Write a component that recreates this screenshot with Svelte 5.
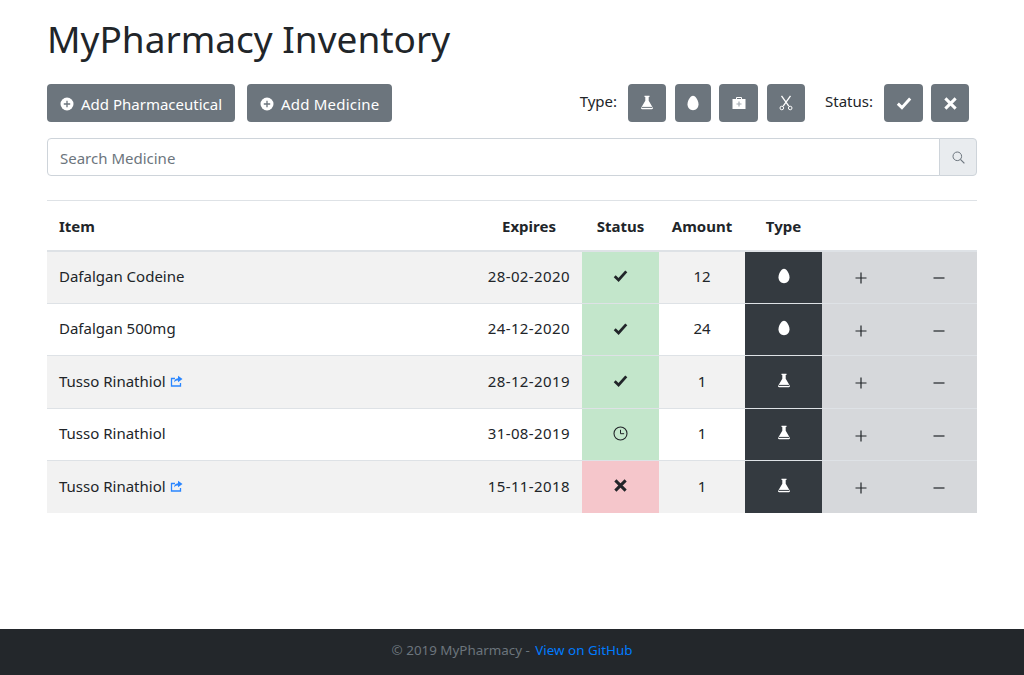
<script>
	const rows = [
		{ name: 'Dafalgan Codeine', expires: '28-02-2020', status: 'ok', amount: 12, type: 'egg', link: false },
		{ name: 'Dafalgan 500mg', expires: '24-12-2020', status: 'ok', amount: 24, type: 'egg', link: false },
		{ name: 'Tusso Rinathiol', expires: '28-12-2019', status: 'ok', amount: 1, type: 'flask', link: true },
		{ name: 'Tusso Rinathiol', expires: '31-08-2019', status: 'soon', amount: 1, type: 'flask', link: false },
		{ name: 'Tusso Rinathiol', expires: '15-11-2018', status: 'expired', amount: 1, type: 'flask', link: true }
	];
</script>

{#snippet plusCircle()}
	<svg class="ic-plus" width="14" height="14" viewBox="0 0 14 14">
		<circle cx="7" cy="7" r="6.5" fill="#fff" />
		<path d="M7 3.8v6.4M3.8 7h6.4" stroke="#6c757d" stroke-width="1.3" />
	</svg>
{/snippet}

{#snippet flask(line)}
	<svg width="16" height="16" viewBox="0 0 16 16">
		<path d="M5.500 .8h5v1.100h-.8v3.900l4 6.700c.5 .9 .1 1.700 -.9 1.700H3.200c-1 0 -1.400 -.8 -.9 -1.700l4 -6.700V1.900h-.8z" fill="#fff" />
		<path d="M2.800 12.400h10.400" stroke={line} stroke-width="1" />
	</svg>
{/snippet}

{#snippet egg()}
	<svg width="16" height="16" viewBox="0 0 16 16">
		<path d="M8 .8c2.700 0 5.500 4.900 5.500 8.500 0 3.600 -2.400 5.900 -5.500 5.900s-5.500 -2.300 -5.500 -5.900C2.500 5.700 5.300 .8 8 .8z" fill="#fff" />
	</svg>
{/snippet}

{#snippet check(size, color)}
	<svg width={size} height={size} viewBox="0 0 14 14">
		<path d="M1.600 7.600l3.600 3.500 7.200-8" fill="none" stroke={color} stroke-width="2.600" />
	</svg>
{/snippet}

{#snippet cross(size, color)}
	<svg width={size} height={size} viewBox="0 0 14 14">
		<path d="M2.200 2.200l9.600 9.600M11.800 2.200l-9.600 9.600" fill="none" stroke={color} stroke-width="2.800" />
	</svg>
{/snippet}

{#snippet share()}
	<svg class="share" width="13" height="13" viewBox="0 0 13 13">
		<path d="M5 3.500H1.500v7.500h9V8" fill="none" stroke="#2a86ff" stroke-width="1.300" />
		<path d="M8 .8l4.500 3.200L8 7.200V5.400c-1.800 0-3 .6-4 2 .2-2.400 1.600-3.900 4-4.200z" fill="#2a86ff" />
	</svg>
{/snippet}

<div class="container">
	<h1>MyPharmacy Inventory</h1>

	<div class="toolbar">
		<button class="btn add">{@render plusCircle()} Add Pharmaceutical</button>
		<button class="btn add medicine">{@render plusCircle()} Add Medicine</button>
		<div class="filters">
			<span class="label">Type:</span>
			<button class="btn icon" aria-label="Pharmaceutical">{@render flask('#6c757d')}</button>
			<button class="btn icon narrow" aria-label="Medicine">{@render egg()}</button>
			<button class="btn icon wide tight" aria-label="First aid">
				<svg width="16" height="16" viewBox="0 0 16 16">
					<path d="M5.500 4V2.500h5V4" fill="none" stroke="#fff" stroke-width="1" />
					<rect x="1.500" y="4" width="13" height="10" fill="#fff" />
					<path d="M8 6.500v5M5.500 9h5" stroke="#a4abb1" stroke-width="1.200" />
				</svg>
			</button>
			<button class="btn icon" aria-label="Instruments">
				<svg width="16" height="16" viewBox="0 0 16 16" fill="none" stroke="#fff">
					<path d="M3.500 .8l7.300 10.400M12.500 .8L5.200 11.200" stroke-width="1.300" />
					<circle cx="3.800" cy="13" r="1.800" />
					<circle cx="12.200" cy="13" r="1.800" />
				</svg>
			</button>
			<span class="label status-label">Status:</span>
			<button class="btn icon wide" aria-label="Valid">{@render check(16, '#fff')}</button>
			<button class="btn icon tight" aria-label="Expired">{@render cross(15, '#fff')}</button>
		</div>
	</div>

	<div class="search">
		<input type="text" placeholder="Search Medicine" />
		<span class="search-btn">
			<svg width="13" height="13" viewBox="0 0 13 13" fill="none" stroke="#6c757d">
				<circle cx="5.300" cy="5.300" r="4.300" />
				<path d="M8.400 8.400l4 4" stroke-width="1.200" />
			</svg>
		</span>
	</div>

	<table>
		<colgroup>
			<col style="width:429px" />
			<col style="width:106px" />
			<col style="width:77px" />
			<col style="width:86px" />
			<col style="width:77px" />
			<col style="width:78px" />
			<col style="width:77px" />
		</colgroup>
		<thead>
			<tr>
				<th class="left">Item</th>
				<th>Expires</th>
				<th>Status</th>
				<th>Amount</th>
				<th>Type</th>
				<th></th>
				<th></th>
			</tr>
		</thead>
		<tbody>
			{#each rows as row, i}
				<tr class:odd={i % 2 === 0}>
					<td class="left">{row.name}{#if row.link}{@render share()}{/if}</td>
					<td class="date">{row.expires}</td>
					<td class={row.status === 'expired' ? 'danger' : 'success'}>
						{#if row.status === 'ok'}
							{@render check(15, '#212529')}
						{:else if row.status === 'soon'}
							<svg width="15" height="15" viewBox="0 0 15 15" fill="none" stroke="#212529">
								<circle cx="7.500" cy="7.500" r="6.500" stroke-width="1.100" />
								<path d="M7.500 3.800v3.900h3.600" stroke-width="1" />
							</svg>
						{:else}
							{@render cross(15, '#212529')}
						{/if}
					</td>
					<td>{row.amount}</td>
					<td class="dark">
						{#if row.type === 'egg'}{@render egg()}{:else}{@render flask('#343a40')}{/if}
					</td>
					<td class="secondary">
						<svg class="adjust" width="12" height="12" viewBox="0 0 12 12"><path d="M6 .5v11M.5 6h11" stroke="#212529" stroke-width="1.200" /></svg>
					</td>
					<td class="secondary">
						<svg class="adjust" width="12" height="12" viewBox="0 0 12 12"><path d="M.5 6h11" stroke="#212529" stroke-width="1.200" /></svg>
					</td>
				</tr>
			{/each}
		</tbody>
	</table>
</div>

<footer>
	<span>© 2019 MyPharmacy -{' '}</span><a href="#top">View on GitHub</a>
</footer>

<style>
	:global(body) {
		margin: 0;
		font-family: 'Noto Sans', 'Open Sans', sans-serif;
		font-size: 15px;
		color: #212529;
		background: #fff;
	}

	.container {
		box-sizing: border-box;
		width: 960px;
		height: 629px;
		margin: 0 auto;
		padding: 0 15px;
	}

	h1 {
		margin: 0;
		padding-top: 15px;
		height: 84px;
		box-sizing: border-box;
		font-size: 37px;
		font-weight: 400;
		line-height: 48px;
	}

	.toolbar {
		display: flex;
		align-items: center;
		gap: 12px;
		height: 38px;
	}

	.btn {
		display: inline-flex;
		align-items: center;
		justify-content: center;
		box-sizing: border-box;
		height: 38px;
		border: 0;
		border-radius: 4px;
		background: #6c757d;
		color: #fff;
		font: inherit;
		padding: 0;
	}

	.add {
		gap: 7px;
		padding: 1px 13px 0;
	}

	.medicine {
		letter-spacing: 0.2px;
	}

	.filters {
		margin-left: auto;
		margin-right: 8px;
		display: flex;
		align-items: center;
		gap: 9px;
	}

	.label {
		margin-right: 2px;
		margin-top: -4px;
	}

	.status-label {
		margin-left: 11px;
		margin-right: 2px;
	}

	.icon {
		width: 38px;
	}

	.narrow {
		width: 36px;
	}

	.wide {
		width: 39px;
	}

	.tight {
		margin-left: -1px;
	}

	.search {
		display: flex;
		height: 38px;
		margin-top: 16px;
	}

	.search input {
		flex: 1;
		box-sizing: border-box;
		height: 38px;
		min-width: 0;
		padding: 1px 12px 0;
		border: 1px solid #ced4da;
		border-radius: 4px 0 0 4px;
		font: inherit;
		outline: none;
	}

	.search input::placeholder {
		color: #6c757d;
		opacity: 1;
	}

	.search-btn {
		box-sizing: border-box;
		width: 38px;
		display: flex;
		align-items: center;
		justify-content: center;
		margin-left: -1px;
		background: #e9ecef;
		border: 1px solid #ced4da;
		border-radius: 0 4px 4px 0;
	}

	table {
		width: 930px;
		margin-top: 24px;
		border-collapse: collapse;
		table-layout: fixed;
	}

	th {
		height: 50px;
		padding: 2px 12px 0;
		border-top: 1px solid #dee2e6;
		border-bottom: 2px solid #dee2e6;
		font-weight: 700;
		text-align: center;
		box-sizing: border-box;
	}

	td {
		height: 52.500px;
		padding: 0 12px 2px;
		border-top: 1px solid #dee2e6;
		text-align: center;
		box-sizing: border-box;
	}

	tbody tr:first-child td {
		border-top: 0;
	}

	td svg {
		display: inline-block;
		vertical-align: middle;
		margin-top: -4px;
	}

	td svg.adjust {
		margin-top: 1px;
	}

	td svg.share {
		margin-top: -2px;
		margin-left: 4px;
	}

	.left {
		text-align: left;
	}

	.date {
		padding-left: 0;
		text-align: right;
		white-space: nowrap;
		letter-spacing: 0.4px;
	}

	.odd td {
		background: #f2f2f2;
	}

	.odd td.success,
	td.success {
		background: #c3e6cb;
	}

	.odd td.danger,
	td.danger {
		background: #f5c6cb;
	}

	.odd td.dark,
	td.dark {
		background: #343a40;
	}

	.odd td.secondary,
	td.secondary {
		background: #d6d8db;
	}

	footer {
		box-sizing: border-box;
		height: 46px;
		padding-bottom: 4px;
		display: flex;
		align-items: center;
		justify-content: center;
		white-space: pre;
		background: #23272b;
		color: #6c757d;
		font-size: 13.400px;
	}

	footer a {
		margin-left: 2px;
		color: #007bff;
		text-decoration: none;
	}
</style>
